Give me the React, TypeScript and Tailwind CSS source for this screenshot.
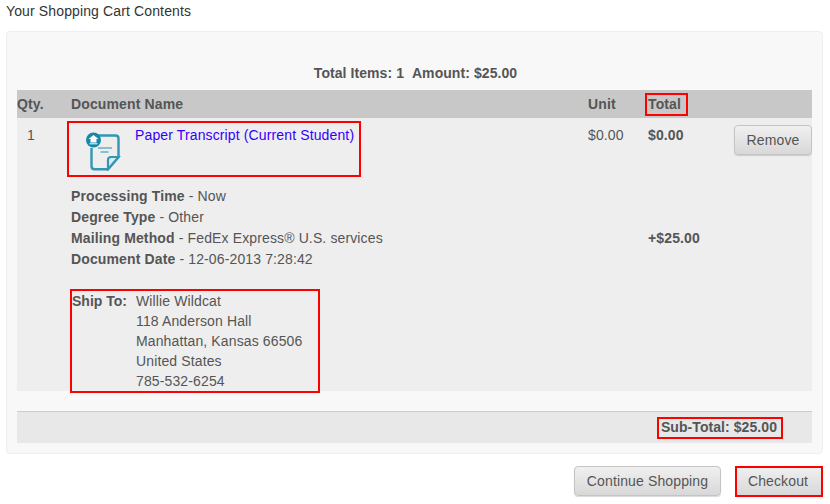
import React from 'react';

const btn =
  'rounded-[4px] border border-[#c4c4c4] bg-gradient-to-b from-[#f0f0f0] to-[#d8d8d8] text-[14px] leading-none text-[#555] shadow-[0_1px_1px_rgba(0,0,0,0.15)]';

function TranscriptIcon() {
  return (
    <svg width="38" height="40" viewBox="0 0 38 40" fill="none">
      <path
        d="M10 4.500h20.500q3 0 3 3V26L23 38.200H9.500q-3 0-3-3V17"
        stroke="#3296b4"
        strokeWidth="2.400"
      />
      <path d="M33.500 26h-7.500q-3 0-3 3v9.200z" stroke="#3296b4" strokeWidth="2.200" fill="#d9ecf2" />
      <path d="M13 17h14" stroke="#6fb3c9" strokeWidth="1.600" />
      <path d="M15.500 21h8" stroke="#6fb3c9" strokeWidth="1.600" />
      <circle cx="8.500" cy="9" r="7.500" fill="#1587a8" />
      <path d="M8.500 4l5 4h-2v3.500H5.500V8h-2z" fill="#fff" />
      <path d="M4.500 12.800h8" stroke="#fff" strokeWidth="1" />
    </svg>
  );
}

function Detail({ label, value }: { label: string; value: string }) {
  return (
    <div className="h-[21px] leading-[21px]">
      <b className="font-bold">{label}</b> - {value}
    </div>
  );
}

export default function App() {
  return (
    <div className="relative h-[504px] w-[830px] overflow-hidden bg-white pl-[6px] pr-[7px] font-['Liberation_Sans',Arial,sans-serif] text-[14px] tracking-[0.13px] text-[#555]">
      <div className="h-[31px] pt-[3px] leading-[16px] text-[#333]">Your Shopping Cart Contents</div>

      {/* Cart panel */}
      <div className="h-[423px] rounded-[4px] border border-[#eeeeee] bg-[#f8f8f8] px-[10px]">
        <div className="h-[58px] pl-[2px] pt-[33px] text-center font-bold leading-[16px] tracking-[0.07px]">
          Total Items: 1&nbsp;&nbsp;Amount: $25.00
        </div>

        <div className="grid h-[28px] grid-cols-[54px_517px_60px_164px] items-center bg-[#c8c8c8] font-bold leading-[28px]">
          <div>Qty.</div>
          <div>Document Name</div>
          <div>Unit</div>
          <div>Total</div>
        </div>

        <div className="h-[273px] bg-[#eeeeee]">
          <div className="grid h-[68px] grid-cols-[54px_517px_60px_86px_78px] pt-[9px] leading-[16px]">
            <div className="pl-[10px]">1</div>
            <div className="flex">
              <div className="w-[64px] pl-[14px] pt-[4px]">
                <TranscriptIcon />
              </div>
              <a href="#" className="text-[#3300ff]">
                Paper Transcript (Current Student)
              </a>
            </div>
            <div>$0.00</div>
            <div className="font-bold">$0.00</div>
            <button className={`${btn} -mt-[2px] h-[30px]`}>Remove</button>
          </div>

          <div className="grid grid-cols-[54px_577px_164px]">
            <div />
            <div className="h-[84px]">
              <Detail label="Processing Time" value="Now" />
              <Detail label="Degree Type" value="Other" />
              <Detail label="Mailing Method" value="FedEx Express® U.S. services" />
              <Detail label="Document Date" value="12-06-2013 7:28:42" />
            </div>
            <div className="pt-[42px] font-bold leading-[21px]">+$25.00</div>
          </div>

          <div className="ml-[54px] mt-[21px] flex leading-[20px]">
            <b className="w-[65px] pl-px font-bold tracking-normal">Ship To:</b>
            <div>
              <div>Willie Wildcat</div>
              <div>118 Anderson Hall</div>
              <div>Manhattan, Kansas 66506</div>
              <div>United States</div>
              <div>785-532-6254</div>
            </div>
          </div>
        </div>

        <div className="mt-[20px] flex h-[32px] items-center justify-end border-t border-[#cccccc] bg-[#e8e8e8] pr-[35px] font-bold tracking-[0.07px]">
          Sub-Total: $25.00
        </div>
      </div>

      <div className="mt-[12px] flex justify-end gap-[14px]">
        <button className={`${btn} h-[30px] w-[147px]`}>Continue Shopping</button>
        <button className={`${btn} h-[30px] w-[88px] pr-[2px]`}>Checkout</button>
      </div>

      {/* Red annotation boxes */}
      <div className="absolute left-[645px] top-[93px] h-[23px] w-[43px] border-2 border-[#f00]" />
      <div className="absolute left-[67px] top-[121px] h-[56px] w-[294px] border-2 border-[#f00]" />
      <div className="absolute left-[70px] top-[289px] h-[104px] w-[250px] border-2 border-[#f00]" />
      <div className="absolute left-[657px] top-[417px] h-[22px] w-[126px] border-2 border-[#f00]" />
      <div className="absolute left-[735px] top-[466px] h-[31px] w-[88px] border-2 border-[#f00]" />
    </div>
  );
}
